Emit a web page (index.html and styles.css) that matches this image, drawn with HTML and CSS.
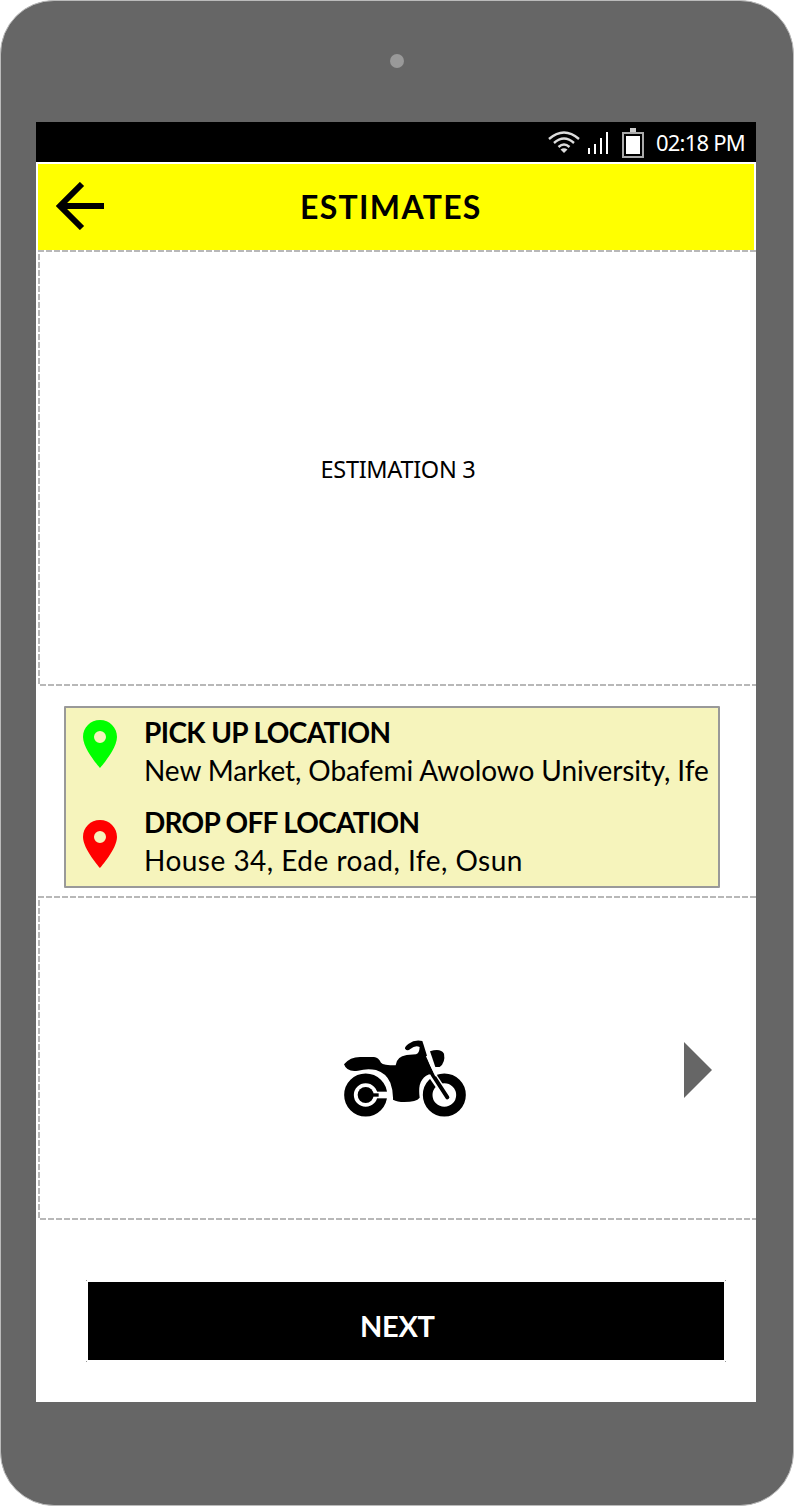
FILE: index.html
```html
<!DOCTYPE html>
<html lang="en">
<head>
<meta charset="utf-8">
<title>Estimates</title>
<link rel="stylesheet" href="styles.css">
</head>
<body>
<div class="phone">
  <div class="bezel"><span class="camera"></span></div>
  <main class="screen">
    <div class="status">
      <svg class="wifi" width="32" height="24" viewBox="0 0 32 24" fill="none" stroke="#ddd" stroke-width="2.4">
        <path d="M1 9Q16-4 31 9M6 13Q16 4 26 13M10.500 17Q16 12 21.500 17"/>
        <path d="M12.500 19.500Q16 17 19.500 19.500L16 23Z" fill="#ddd" stroke="none"/>
      </svg>
      <svg class="signal" width="20" height="22" viewBox="0 0 20 22" fill="#fff">
        <path d="M0 16h2v6H0zM6 12h2v10H6zM12 6h2v16h-2zM18 0h2v22h-2z"/>
      </svg>
      <svg class="battery" width="22" height="30" viewBox="0 0 22 30">
        <path d="M8 0h6v4H8z" fill="#ccc"/>
        <path d="M1 5h20v24H1z" fill="#000" stroke="#aaa" stroke-width="2"/>
        <path d="M4 8h14v18H4z" fill="#fff"/>
      </svg>
      <span class="time">02:18 PM</span>
    </div>
    <header class="bar">
      <svg class="back" width="48" height="48" viewBox="0 0 48 48" fill="none" stroke="#000" stroke-width="6">
        <path d="M48 24H6M26 2L4 24L26 46"/>
      </svg>
      <h1 class="title">ESTIMATES</h1>
    </header>
    <section class="panel panel-map"><span class="estimation">ESTIMATION 3</span></section>
    <section class="trip">
      <div class="stop">
        <svg class="pin pin-green" width="34" height="48" viewBox="0 0 34 48"><path fill-rule="evenodd" d="M17 0C7.500 0 0 7.500 0 17C0 29 17 48 17 48S34 29 34 17C34 7.500 26.500 0 17 0ZM17 11a6 6 0 1 0 0 12a6 6 0 0 0 0-12Z"/></svg>
        <div class="lines">
          <h2 class="label pickup">PICK UP LOCATION</h2>
          <p class="place market">New Market, Obafemi Awolowo University, Ife</p>
        </div>
      </div>
      <div class="stop">
        <svg class="pin pin-red" width="34" height="48" viewBox="0 0 34 48"><path fill-rule="evenodd" d="M17 0C7.500 0 0 7.500 0 17C0 29 17 48 17 48S34 29 34 17C34 7.500 26.500 0 17 0ZM17 11a6 6 0 1 0 0 12a6 6 0 0 0 0-12Z"/></svg>
        <div class="lines">
          <h2 class="label dropoff">DROP OFF LOCATION</h2>
          <p class="place house">House 34, Ede road, Ife, Osun</p>
        </div>
      </div>
    </section>
    <section class="panel panel-ride">
      <svg class="bike" width="122" height="78" viewBox="42 42 366 234">
        <path d="M42 118Q60 96 90 96H132Q145 97 153 113Q160 121 197 121Q200 94 230 90L258 88Q268 86 269 66Q256 60 241 72Q232 80 225 71Q224 64 236 56Q254 43 277 48L281 60L308 148Q288 146 276 165Q264 181 269 218Q259 231 223 231Q202 231 189 224Q190 197 181 173Q168 144 138 135Q112 129 84 137Q50 142 42 118Z"/>
        <path d="M300 79Q332 69 342 86Q347 112 329 126L316 126Z"/>
        <circle cx="107" cy="210" r="50" fill="none" stroke="#000" stroke-width="29"/>
        <circle cx="107" cy="210" r="24"/>
        <path d="M138 200H182V220H138Z" fill="#fff"/>
        <path d="M120 205H146V215H120Z"/>
        <circle cx="343" cy="210" r="50" fill="none" stroke="#000" stroke-width="29"/>
        <path d="M306 150L350 214" stroke="#fff" stroke-width="23"/>
        <path d="M286 106L309 151L352 217" fill="none" stroke="#000" stroke-width="12" stroke-linecap="round"/>
        <path d="M291 92L319 153" stroke="#fff" stroke-width="7"/>
      </svg>
      <svg class="arrow" width="28" height="56" viewBox="0 0 28 56"><path d="M0 0L28 28L0 56Z" fill="#666"/></svg>
    </section>
    <div class="action"><button class="next"><span class="next-text">NEXT</span></button></div>
  </main>
</div>
</body>
</html>
```
FILE: styles.css
```css
* { box-sizing: border-box; }
body { margin: 0; background: #fff; color: #000; }
h1, h2, p { margin: 0; white-space: nowrap; }
svg { display: block; flex: none; }
.phone { width: 794px; height: 1506px; padding: 0 35px; background: #666; border: 1px solid #bbb; border-radius: 54px; }
.bezel { height: 121px; padding-top: 53px; }
.camera { display: block; width: 14px; height: 14px; margin: 0 auto; border-radius: 50%; background: #999; }
.screen { width: 720px; height: 1280px; background: #fff; }
.status { display: flex; height: 40px; padding-left: 512px; background: #000; color: #fff; }
.wifi { margin-top: 8px; }
.signal { margin: 10px 0 0 8px; }
.battery { margin: 6px 0 0 14px; }
.time { margin-left: 12px; font: 22px/40px "Noto Sans", sans-serif; letter-spacing: -0.8px; white-space: nowrap; }
.bar { display: flex; height: 86px; margin: 2px 2px 0; background: #ff0; }
.back { margin: 18px 0 0 18px; }
.title { margin-left: 196px; font: 700 32px/86px "Segoe Print", "Comic Sans MS", Lato, sans-serif; letter-spacing: 1.3px; }
.panel {
  margin-left: 2px;
  background-image:
    repeating-linear-gradient(90deg, #b8b8b8 0 6px, transparent 6px 8px),
    repeating-linear-gradient(180deg, #b8b8b8 0 6px, transparent 6px 8px),
    repeating-linear-gradient(90deg, #b8b8b8 0 6px, transparent 6px 8px);
  background-size: 100% 2px, 2px calc(100% - 6px), calc(100% - 2px) 2px;
  background-position: 0 0, 0 4px, 2px 100%;
  background-repeat: no-repeat;
}
.panel-map { display: flex; justify-content: center; height: 436px; }
.estimation { padding-left: 2px; font: 23.500px/438px "Noto Sans", sans-serif; letter-spacing: -0.3px; }
.trip { display: flex; flex-direction: column; gap: 10px; width: 656px; height: 182px; margin: 20px 0 8px 28px; padding: 5px 0 0 17px; background: #f6f4bc; border: 2px solid #999; border-radius: 1px; }
.stop { display: flex; gap: 27px; height: 80px; }
.pin { margin-top: 7px; }
.pin-green { fill: #0f0; }
.pin-red { fill: #f00; margin-top: 17px; }
.label { font: 700 28px/38px "Segoe Print", "Comic Sans MS", Lato, sans-serif; }
.place { font: 28px/38px "Segoe Print", "Comic Sans MS", Lato, sans-serif; }
.pickup { letter-spacing: -0.6px; }
.dropoff { letter-spacing: -0.7px; }
.market { letter-spacing: -0.1px; }
.house { letter-spacing: 0.48px; }
.panel-ride { display: flex; height: 324px; padding-left: 306px; }
.bike { margin-top: 143px; filter: blur(0.7px); }
.arrow { margin: 146px 0 0 218px; }
.action {
  width: 640px; height: 82px; margin: 60px 0 0 50px; padding: 2px;
  background: linear-gradient(#999, #999) 0 0, linear-gradient(#999, #999) 100% 0, linear-gradient(#999, #999) 0 100%, linear-gradient(#999, #999) 100% 100%;
  background-size: 1px 1px; background-repeat: no-repeat;
}
.next { display: flex; width: 636px; height: 78px; padding: 5px 0 0 272px; background: #000; border: 0; color: #fff; }
.next-text { font: 700 29px/78px "Segoe Print", "Comic Sans MS", Lato, sans-serif; letter-spacing: -0.3px; }
```
